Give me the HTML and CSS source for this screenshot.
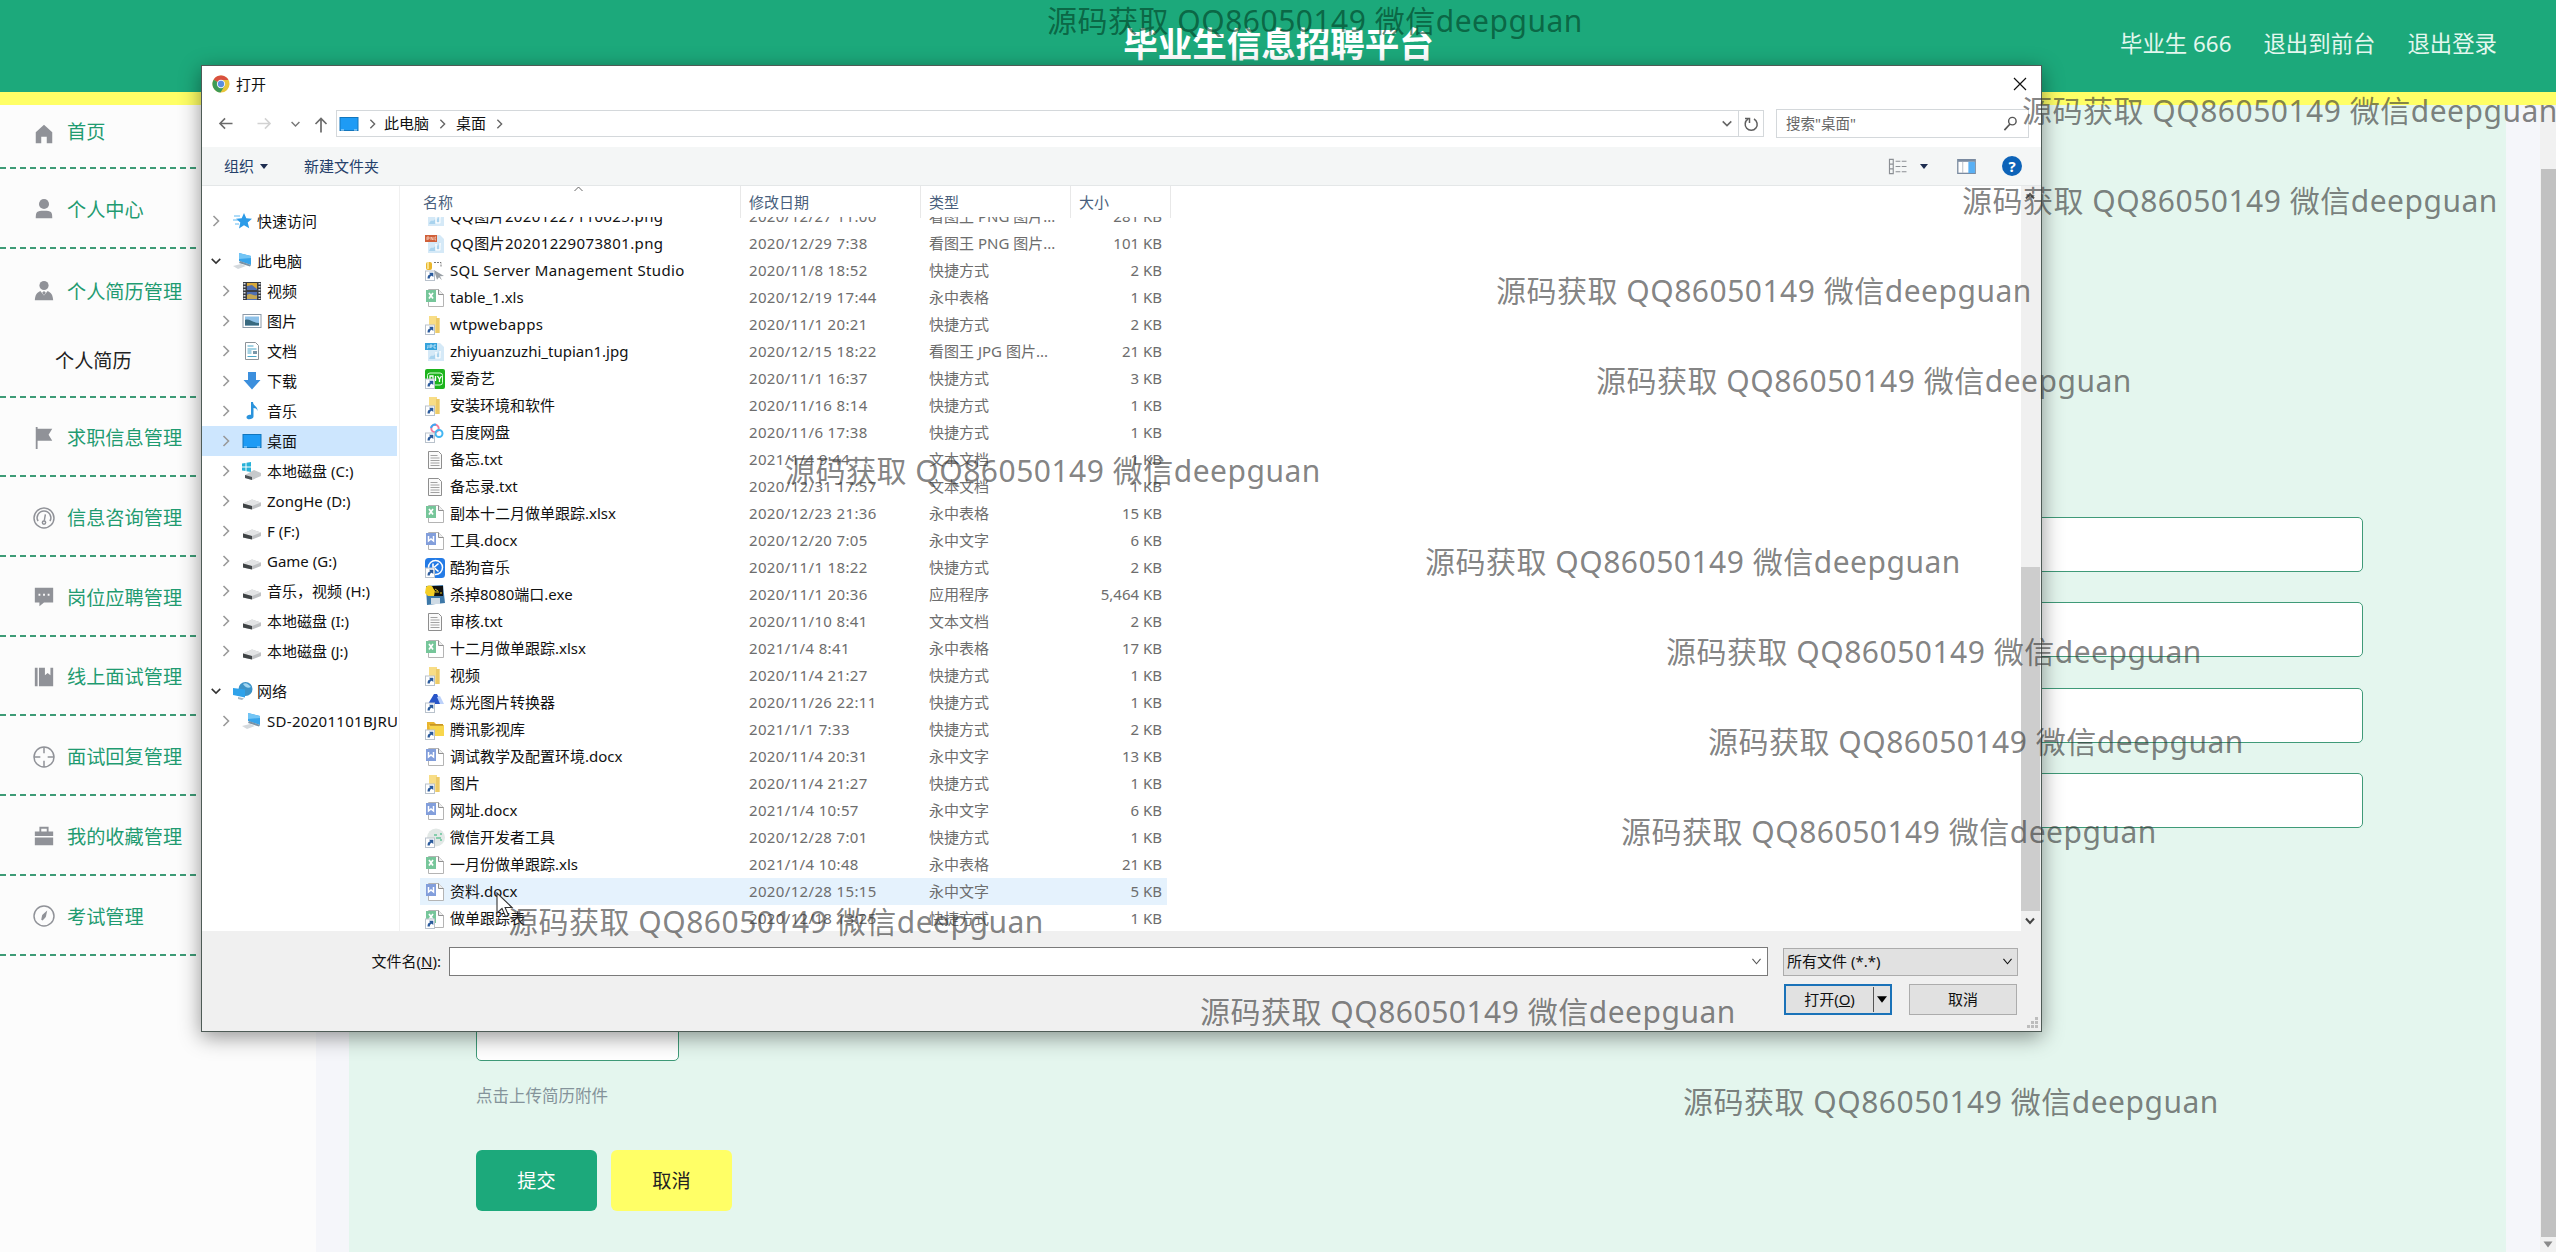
FILE: index.html
```html
<!DOCTYPE html>
<html lang="zh-CN">
<head>
<meta charset="utf-8">
<title>毕业生信息招聘平台</title>
<link rel="stylesheet" href="styles.css">
</head>
<body>
<svg class="sprite" aria-hidden="true">
  <defs>
    <symbol id="shortcut" viewBox="0 0 20 20"><rect x=".5" y="10" width="9" height="9.500" fill="#fff" stroke="#b9c2cc"/><path d="M2.500 17.500c0-3 1-4 2.800-4.300L4 11.800h4.300v4.300L6.800 14.700c-1.300.3-2 1.300-2 2.800z" fill="#2a5a9c"/></symbol>
    <symbol id="page" viewBox="0 0 20 20"><path d="M3.500 1.500h10l5 5v12h-15z" fill="#fff" stroke="#b4b4b4"/><path d="M13.500 1.500v5h5" fill="#eee" stroke="#8f8f8f"/></symbol>
    <symbol id="png" viewBox="0 0 20 20"><path d="M3 1h12l4 4v14H3z" fill="#d5e9f7"/><path d="M4 17c2-6 4-1 6-5s3 4 4-4l2 4v5z" fill="#a9d3ee"/><path d="M11 10v6h4V9" fill="none" stroke="#fff" stroke-width="1.500"/><rect y="1" width="12" height="7" fill="#d0603a"/><path d="M2 3v3M2 3h2v2H2M6 6V3l2 3V3M11 3h-1v3h1" stroke="#f8d8c8" fill="none" stroke-width=".8"/></symbol>
    <symbol id="jpg" viewBox="0 0 20 20"><path d="M3 1h12l4 4v14H3z" fill="#d5e9f7"/><path d="M4 17c2-6 4-1 6-5s3 4 4-4l2 4v5z" fill="#a9d3ee"/><path d="M11 10v6h4V9" fill="none" stroke="#fff" stroke-width="1.500"/><rect y="1" width="12" height="7" fill="#35a3dc"/><path d="M3 3v3H2M5 6V3h2v2H5M11 3H9v3h2" stroke="#d8f0ff" fill="none" stroke-width=".8"/></symbol>
    <symbol id="sql" viewBox="0 0 20 20"><rect x="1" y="1" width="6" height="8" rx="2" fill="#e9b62c"/><rect x="2" y="1" width="2" height="7" fill="#f8e08a"/><path d="M9 1.500h7v5" fill="none" stroke="#777" stroke-dasharray="2 1"/><path d="M9 9l10 6-4 .3 2 4-3-3-2 2.500z" fill="#9aa0a6"/><use href="#shortcut"/></symbol>
    <symbol id="xls" viewBox="0 0 20 20"><use href="#page"/><rect x="1" y="2" width="10" height="12" fill="#76c69a"/><path d="M4 5l4 5.500M8 5l-4 5.500" stroke="#fff" stroke-width="1.700"/></symbol>
    <symbol id="doc" viewBox="0 0 20 20"><use href="#page"/><rect x="1" y="2" width="10" height="12" fill="#829edb"/><path d="M3.500 5v5l2.500-2 2.500 2V5" stroke="#fff" stroke-width="1.500" fill="none"/></symbol>
    <symbol id="xlslink" viewBox="0 0 20 20"><use href="#xls"/><use href="#shortcut"/></symbol>
    <symbol id="folder" viewBox="0 0 20 20"><path d="M4 1h8v2h2.500v15H4z" fill="#f8dd86"/><path d="M11 3h3.500v15H11z" fill="#ecca68"/><use href="#shortcut"/></symbol>
    <symbol id="qiyi" viewBox="0 0 20 20"><rect width="20" height="20" rx="2" fill="#1db41d"/><rect x="2.500" y="4" width="15" height="12" rx="2.500" fill="none" stroke="#d9ffd9"/><path d="M5 7h3v4H5zM10.500 7v5M12.500 7l2 3 2-3M14.500 10v3" stroke="#fff" fill="none" stroke-width="1.300"/><use href="#shortcut"/></symbol>
    <symbol id="baidu" viewBox="0 0 20 20"><circle cx="10" cy="5.500" r="3.700" fill="none" stroke="#f17a9c" stroke-width="2"/><path d="M6 5a4 4 0 0 1 5-3.300" fill="none" stroke="#3aa8f5" stroke-width="2"/><circle cx="14" cy="10.500" r="3.500" fill="none" stroke="#44b6f2" stroke-width="2"/><use href="#shortcut"/></symbol>
    <symbol id="txt" viewBox="0 0 20 20"><path d="M3.500 1.500h10l3 3v14h-13z" fill="#fafafa" stroke="#8e8e8e"/><path d="M5.500 5.500h7M5.500 8h9M5.500 10.500h9M5.500 13h9M5.500 15.500h9" stroke="#a2a2a2"/></symbol>
    <symbol id="kugou" viewBox="0 0 20 20"><rect width="20" height="20" rx="3.500" fill="#247be6"/><circle cx="10.500" cy="9.500" r="7" fill="none" stroke="#fff" stroke-width="1.500"/><path d="M8 5.500v8M13.500 5.500l-4.500 4 4.500 4" fill="none" stroke="#fff" stroke-width="1.600"/><use href="#shortcut"/></symbol>
    <symbol id="exe" viewBox="0 0 20 20"><path d="M1 1l17-1 2 18-18 2z" fill="#3d78a8"/><path d="M6 1h12v10H7z" fill="#111"/><path d="M1 2c3-3 7-1 7 1l2 3-1 5H3L0 8z" fill="#f4ce26"/><path d="M10 4l3 2M10 7h4M15 8h2" stroke="#e8c820"/><path d="M6 13h9v6H6z" fill="#cfdbe5"/></symbol>
    <symbol id="photo" viewBox="0 0 20 20"><path d="M9 1h3l5 10H3z" fill="#2855c8"/><path d="M12 4l3-1 4 8h-4z" fill="#bcd1fa"/><use href="#shortcut"/></symbol>
    <symbol id="tencent" viewBox="0 0 20 20"><path d="M2 2h7l2 2h7v12H2z" fill="#e9b52f"/><path d="M4 5h15v11H6z" fill="#f8d64c"/><path d="M5 5h13" stroke="#a8741a"/><use href="#shortcut"/></symbol>
    <symbol id="wechat" viewBox="0 0 20 20"><circle cx="11" cy="9.500" r="9" fill="#e2e8e6"/><path d="M9 7h3M15 6h2M11 10h5M15 12h2" stroke="#68c39a" stroke-width="1.300"/><use href="#shortcut"/></symbol>

    <symbol id="star" viewBox="0 0 20 20"><path d="M11 2l2.300 5.200 5.700.5-4.300 3.800 1.500 5.800L11 14.200l-5 3.300 1.300-6L3 7.700l5.700-.5z" fill="#2c9be8"/><path d="M1 5h6M0 9h5M2 13h4" stroke="#5fb9f2"/></symbol>
    <symbol id="pc" viewBox="0 0 20 20"><path d="M6 2l12 3v9L6 10z" fill="#38a4ea"/><path d="M6 2l12 3v2L6 8z" fill="#73c5f5"/><path d="M7 10l11 4-1 1.500L6 12z" fill="#7b92a4"/><path d="M0 15l8-2 5 2-8 3z" fill="#d4d9dd"/></symbol>
    <symbol id="video" viewBox="0 0 20 20"><rect x="1" y="1" width="18" height="18" fill="#3a3d42"/><path d="M2.500 2v16M17.500 2v16" stroke="#d8dde4" stroke-width="2" stroke-dasharray="1.500 1.500"/><path d="M5 2h10v7H5z" fill="#d8a93a"/><path d="M5 5l5-1 5 4v1H5zM5 11h10v8H5z" fill="#506fb0"/><path d="M5 14c4-3 7 2 10 0v4H5z" fill="#c7a750"/></symbol>
    <symbol id="picture" viewBox="0 0 20 20"><rect x="1" y="3.500" width="18" height="13" fill="#fff" stroke="#8c9aa8"/><path d="M3 5.500h14v9H3z" fill="#8ec1e8"/><path d="M3 9c4-2 8 3 14 3v2.500H3z" fill="#38697f"/></symbol>
    <symbol id="document" viewBox="0 0 20 20"><path d="M3.500 1.500h10l3 3v14h-13z" fill="#fff" stroke="#8c9399"/><path d="M5.500 5h6M5.500 8h9M5.500 10h4M5.500 12h4M5.500 15.500h9" stroke="#4ba6c8"/><rect x="11" y="10" width="4" height="3" fill="#7a97a8"/></symbol>
    <symbol id="download" viewBox="0 0 20 20"><path d="M6 1h8v8h4.500L10 18.500 1.500 9H6z" fill="#3c8fdd"/></symbol>
    <symbol id="music" viewBox="0 0 20 20"><path d="M9 1h2c0 4 5 4 4.500 9-.5-2-2-3-4-3v8.500c0 3-7 4-7 .7 0-2 2.500-3 4.500-2.400z" fill="#2a93dc"/></symbol>
    <symbol id="desktop" viewBox="0 0 20 20"><rect x="1" y="3.500" width="18" height="13" fill="#1e9bf5" stroke="#1276bd"/><path d="M2 16h3M15 16h3" stroke="#bfe3ff"/></symbol>
    <symbol id="osdrive" viewBox="0 0 20 20"><path d="M0 2.500l3.500-.5v3.500H0zM4.500 1.800L9 1v4.500H4.500zM0 6.500h3.500V10L0 9.500zM4.500 6.500H9V11l-4.500-.7z" fill="#28b2d8"/><path d="M3 14l9-5 7 3v3l-9 4-7-2z" fill="#c6c9cb"/><path d="M3 14l7 2v3l-7-2z" fill="#4b5154"/></symbol>
    <symbol id="drive" viewBox="0 0 20 20"><path d="M1 12.500L10 8.500l9 3v3.500l-9 3.500-9-2z" fill="#bfc1c3"/><path d="M1 12.500l9 2.500 9-3.500-9-3z" fill="#e3e4e5"/><path d="M1 12.500l9 2.500v3.500l-9-2z" fill="#404446"/></symbol>
    <symbol id="network" viewBox="0 0 20 20"><circle cx="12.500" cy="8" r="7" fill="#3c93c8"/><path d="M10 3c3-2 6 1 8 3-3 2-6 0-8-3z" fill="#a4d6f0"/><path d="M0 7l12 1.500v8L0 14z" fill="#2fa2ea"/><path d="M5 16l6 1.500-2 1.500-4-1z" fill="#a9b7c2"/></symbol>

    <symbol id="house" viewBox="0 0 24 24"><path d="M12 2l9 8v12h-6v-7H9v7H3V10z"/></symbol>
    <symbol id="user" viewBox="0 0 24 24"><circle cx="12" cy="6.500" r="5.500"/><path d="M3 22c0-7 1-8 9-8s9 1 9 8z"/></symbol>
    <symbol id="usertie" viewBox="0 0 24 24"><circle cx="12" cy="6" r="5"/><path d="M2 22c.5-6 2-8 6-10l4 5 4-5c4 2 5.500 4 6 10z"/><path d="M12 12l2 2-2 2.500-2-2.500z"/></symbol>
    <symbol id="flag" viewBox="0 0 24 24"><path d="M3 0h2v2h16l-4 6.500 4 6.500H5v9H3z"/></symbol>
    <symbol id="gauge" viewBox="0 0 24 24"><g fill="none" stroke="currentColor" stroke-width="1.600"><circle cx="12" cy="12" r="10.900"/><path d="M5.500 15.500a7.500 7.500 0 1 1 13 0M12.300 15l1.200-7"/><circle cx="12" cy="17" r="1.800"/></g></symbol>
    <symbol id="chat" viewBox="0 0 24 24"><path d="M2 2h20v16H12l-5 4v-4H2z"/><path d="M6 9.500h2M11 9.500h2M16 9.500h2" stroke="#fcfcfc" stroke-width="2"/></symbol>
    <symbol id="book" viewBox="0 0 24 24"><path d="M2 2h3v20H2zM6.500 2H13v8l3-2.500 3 2.500V2h3v20H6.500z"/></symbol>
    <symbol id="aim" viewBox="0 0 24 24"><g fill="none" stroke="currentColor" stroke-width="1.600"><circle cx="12" cy="12" r="10.900"/><path d="M12 1v7M12 16v7M1 12h7M16 12h7"/></g></symbol>
    <symbol id="case" viewBox="0 0 24 24"><path d="M7 2h10v5h5v5H2V7h5zM9 4v3h6V4zM2 13.500h20V22H2z" fill-rule="evenodd"/></symbol>
    <symbol id="compass" viewBox="0 0 24 24"><circle cx="12" cy="12" r="10.900" fill="none" stroke="currentColor" stroke-width="1.600"/><path d="M15.500 6L14 13l-3.500 4-1.500-1 1-5z"/></symbol>
    <symbol id="right" viewBox="0 0 10 14"><path d="M2.500 2l5 5-5 5" fill="none" stroke="currentColor" stroke-width="1.600"/></symbol>
    <symbol id="down" viewBox="0 0 14 10"><path d="M2 2.500l5 5 5-5" fill="none" stroke="currentColor" stroke-width="1.800"/></symbol>
    <symbol id="thin" viewBox="0 0 12 10"><path d="M1.500 2L6 7.500 10.500 2" fill="none" stroke="currentColor" stroke-width="1.200"/></symbol>
  </defs>
</svg>

<div class="app">
  <header class="topbar">
    <h1>毕业生信息招聘平台</h1>
    <nav class="account"><a>毕业生 666</a><a>退出到前台</a><a>退出登录</a></nav>
  </header>
  <div class="stripe"></div>
  <div class="body">
    <aside class="sidebar">
      <ul class="menu">
        <li class="first"><svg><use href="#house"/></svg>首页</li>
        <li><svg><use href="#user"/></svg>个人中心</li>
        <li class="open"><svg><use href="#usertie"/></svg>个人简历管理</li>
        <li class="sub">个人简历</li>
        <li><svg><use href="#flag"/></svg>求职信息管理</li>
        <li><svg><use href="#gauge"/></svg>信息咨询管理</li>
        <li><svg><use href="#chat"/></svg>岗位应聘管理</li>
        <li><svg><use href="#book"/></svg>线上面试管理</li>
        <li><svg><use href="#aim"/></svg>面试回复管理</li>
        <li><svg><use href="#case"/></svg>我的收藏管理</li>
        <li><svg><use href="#compass"/></svg>考试管理</li>
      </ul>
    </aside>
    <main class="content">
      <form class="resume">
        <div class="field"></div><div class="field"></div><div class="field"></div><div class="field"></div>
        <div class="upload"></div>
        <p class="hint">点击上传简历附件</p>
        <div class="actions"><button type="button" class="submit">提交</button><button type="button" class="cancel">取消</button></div>
      </form>
    </main>
    <div class="pagebar"><div class="pagethumb"></div><svg viewBox="0 0 16 14"><path d="M3.500 4h9L8 10z" fill="#8a8a8a"/></svg></div>
  </div>
</div>

<section class="dialog">
  <div class="titlebar">
    <svg class="chrome" viewBox="0 0 20 20"><circle cx="10" cy="10" r="9.500" fill="#e8c53a"/><path d="M10 10L1.800 5.200A9.500 9.500 0 0 1 18.300 5.500H10z" fill="#d9503f"/><path d="M10 10L1.800 5.200A9.500 9.500 0 0 0 9.500 19.500L14 12z" fill="#3d9a55"/><circle cx="10" cy="10" r="4.600" fill="#eef3fa"/><circle cx="10" cy="10" r="3.500" fill="#5a8ee0"/></svg>
    <span>打开</span>
    <svg class="close" viewBox="0 0 14 14"><path d="M1 1l12 12M13 1L1 13" stroke="#111" stroke-width="1.200"/></svg>
  </div>
  <div class="navbar">
    <svg class="arrow back" viewBox="0 0 16 14"><path d="M15 7H2M7 1.500L1.500 7 7 12.500" fill="none" stroke="#6b6b6b" stroke-width="1.700"/></svg>
    <svg class="arrow forward" viewBox="0 0 16 14"><path d="M1 7h13M9 1.500L14.500 7 9 12.500" fill="none" stroke="#d2d2d2" stroke-width="1.700"/></svg>
    <svg class="recent"><use href="#down"/></svg>
    <svg class="up" viewBox="0 0 14 16"><path d="M7 15.500V2M1.500 7L7 1.500 12.500 7" fill="none" stroke="#6b6b6b" stroke-width="1.700"/></svg>
    <div class="address">
      <svg class="place"><use href="#desktop"/></svg>
      <svg class="sep"><use href="#right"/></svg><span>此电脑</span>
      <svg class="sep"><use href="#right"/></svg><span>桌面</span>
      <svg class="sep"><use href="#right"/></svg>
      <svg class="drop"><use href="#down"/></svg>
      <div class="refresh"><svg viewBox="0 0 16 16"><path d="M5 3.200A6 6 0 1 0 11 3M2 2.500h4.500V7" fill="none" stroke="#5f5f5f" stroke-width="1.500"/></svg></div>
    </div>
    <div class="search"><span>搜索"桌面"</span><svg viewBox="0 0 16 16"><circle cx="10" cy="5.500" r="4" fill="none" stroke="#555" stroke-width="1.500"/><path d="M7.500 8.500l-6 6.500" stroke="#555" stroke-width="1.800"/></svg></div>
  </div>
  <div class="toolbar">
    <span class="organize">组织<i class="tri"></i></span><span>新建文件夹</span>
    <svg class="view" viewBox="0 0 20 18"><path d="M1.500 1.500h4v15h-4zM1.500 6.500h4M1.500 11.500h4M8 3.500h5M14.500 3.500h5M8 9h5M14.500 9h5M8 14.500h5M14.500 14.500h5" fill="none" stroke="#8b8f94" stroke-width="1.200"/></svg>
    <i class="tri"></i>
    <svg class="pane" viewBox="0 0 20 16"><rect x=".7" y=".7" width="18.600" height="14.600" fill="#fff" stroke="#7b8ba0" stroke-width="1.400"/><path d="M1 2h18" stroke="#7b8ba0" stroke-width="2"/><rect x="12" y="3" width="7" height="12" fill="#59b0f4"/><path d="M6 3v12" stroke="#b5bcc4"/></svg>
    <b class="help">?</b>
  </div>
  <div class="panes">
    <ul class="tree">
      <li class="root"><svg class="tw"><use href="#right"/></svg><svg class="ic"><use href="#star"/></svg>快速访问</li>
      <li class="root expanded gap10"><svg class="tw"><use href="#down"/></svg><svg class="ic"><use href="#pc"/></svg>此电脑</li>
      <li><svg class="tw"><use href="#right"/></svg><svg class="ic"><use href="#video"/></svg>视频</li>
      <li><svg class="tw"><use href="#right"/></svg><svg class="ic"><use href="#picture"/></svg>图片</li>
      <li><svg class="tw"><use href="#right"/></svg><svg class="ic"><use href="#document"/></svg>文档</li>
      <li><svg class="tw"><use href="#right"/></svg><svg class="ic"><use href="#download"/></svg>下载</li>
      <li><svg class="tw"><use href="#right"/></svg><svg class="ic"><use href="#music"/></svg>音乐</li>
      <li class="selected"><svg class="tw"><use href="#right"/></svg><svg class="ic"><use href="#desktop"/></svg>桌面</li>
      <li><svg class="tw"><use href="#right"/></svg><svg class="ic"><use href="#osdrive"/></svg>本地磁盘 (C:)</li>
      <li><svg class="tw"><use href="#right"/></svg><svg class="ic"><use href="#drive"/></svg>ZongHe (D:)</li>
      <li><svg class="tw"><use href="#right"/></svg><svg class="ic"><use href="#drive"/></svg>F (F:)</li>
      <li><svg class="tw"><use href="#right"/></svg><svg class="ic"><use href="#drive"/></svg>Game (G:)</li>
      <li><svg class="tw"><use href="#right"/></svg><svg class="ic"><use href="#drive"/></svg>音乐，视频 (H:)</li>
      <li><svg class="tw"><use href="#right"/></svg><svg class="ic"><use href="#drive"/></svg>本地磁盘 (I:)</li>
      <li><svg class="tw"><use href="#right"/></svg><svg class="ic"><use href="#drive"/></svg>本地磁盘 (J:)</li>
      <li class="root expanded gap10"><svg class="tw"><use href="#down"/></svg><svg class="ic"><use href="#network"/></svg>网络</li>
      <li class="host"><svg class="tw"><use href="#right"/></svg><svg class="ic"><use href="#pc"/></svg>SD-20201101BJRU</li>
    </ul>
    <div class="listing">
      <div class="columns">
        <span class="c-name">名称<svg viewBox="0 0 10 6"><path d="M1 5l4-4 4 4" fill="none" stroke="#666"/></svg></span><span class="c-date">修改日期</span><span class="c-type">类型</span><span class="c-size">大小</span>
      </div>
      <ul class="files">
        <li><svg><use href="#png"/></svg><span class="wide">QQ图片20201227110625.png</span><time>2020/12/27 11:06</time><em>看图王 PNG 图片...</em><b>281 KB</b></li>
        <li><svg><use href="#png"/></svg><span class="wide">QQ图片20201229073801.png</span><time>2020/12/29 7:38</time><em>看图王 PNG 图片...</em><b>101 KB</b></li>
        <li><svg><use href="#sql"/></svg><span class="wide">SQL Server Management Studio</span><time>2020/11/8 18:52</time><em>快捷方式</em><b>2 KB</b></li>
        <li><svg><use href="#xls"/></svg><span>table_1.xls</span><time>2020/12/19 17:44</time><em>永中表格</em><b>1 KB</b></li>
        <li><svg><use href="#folder"/></svg><span class="wide">wtpwebapps</span><time>2020/11/1 20:21</time><em>快捷方式</em><b>2 KB</b></li>
        <li><svg><use href="#jpg"/></svg><span>zhiyuanzuzhi_tupian1.jpg</span><time>2020/12/15 18:22</time><em>看图王 JPG 图片...</em><b>21 KB</b></li>
        <li><svg><use href="#qiyi"/></svg><span>爱奇艺</span><time>2020/11/1 16:37</time><em>快捷方式</em><b>3 KB</b></li>
        <li><svg><use href="#folder"/></svg><span>安装环境和软件</span><time>2020/11/16 8:14</time><em>快捷方式</em><b>1 KB</b></li>
        <li><svg><use href="#baidu"/></svg><span>百度网盘</span><time>2020/11/6 17:38</time><em>快捷方式</em><b>1 KB</b></li>
        <li><svg><use href="#txt"/></svg><span>备忘.txt</span><time>2021/1/4 9:44</time><em>文本文档</em><b>1 KB</b></li>
        <li><svg><use href="#txt"/></svg><span>备忘录.txt</span><time>2020/12/31 17:57</time><em>文本文档</em><b>1 KB</b></li>
        <li><svg><use href="#xls"/></svg><span>副本十二月做单跟踪.xlsx</span><time>2020/12/23 21:36</time><em>永中表格</em><b>15 KB</b></li>
        <li><svg><use href="#doc"/></svg><span>工具.docx</span><time>2020/12/20 7:05</time><em>永中文字</em><b>6 KB</b></li>
        <li><svg><use href="#kugou"/></svg><span>酷狗音乐</span><time>2020/11/1 18:22</time><em>快捷方式</em><b>2 KB</b></li>
        <li><svg><use href="#exe"/></svg><span>杀掉8080端口.exe</span><time>2020/11/1 20:36</time><em>应用程序</em><b>5,464 KB</b></li>
        <li><svg><use href="#txt"/></svg><span>审核.txt</span><time>2020/11/10 8:41</time><em>文本文档</em><b>2 KB</b></li>
        <li><svg><use href="#xls"/></svg><span>十二月做单跟踪.xlsx</span><time>2021/1/4 8:41</time><em>永中表格</em><b>17 KB</b></li>
        <li><svg><use href="#folder"/></svg><span>视频</span><time>2020/11/4 21:27</time><em>快捷方式</em><b>1 KB</b></li>
        <li><svg><use href="#photo"/></svg><span>烁光图片转换器</span><time>2020/11/26 22:11</time><em>快捷方式</em><b>1 KB</b></li>
        <li><svg><use href="#tencent"/></svg><span>腾讯影视库</span><time>2021/1/1 7:33</time><em>快捷方式</em><b>2 KB</b></li>
        <li><svg><use href="#doc"/></svg><span>调试教学及配置环境.docx</span><time>2020/11/4 20:31</time><em>永中文字</em><b>13 KB</b></li>
        <li><svg><use href="#folder"/></svg><span>图片</span><time>2020/11/4 21:27</time><em>快捷方式</em><b>1 KB</b></li>
        <li><svg><use href="#doc"/></svg><span>网址.docx</span><time>2021/1/4 10:57</time><em>永中文字</em><b>6 KB</b></li>
        <li><svg><use href="#wechat"/></svg><span>微信开发者工具</span><time>2020/12/28 7:01</time><em>快捷方式</em><b>1 KB</b></li>
        <li><svg><use href="#xls"/></svg><span>一月份做单跟踪.xls</span><time>2021/1/4 10:48</time><em>永中表格</em><b>21 KB</b></li>
        <li class="hover"><svg><use href="#doc"/></svg><span>资料.docx</span><time>2020/12/28 15:15</time><em>永中文字</em><b>5 KB</b></li>
        <li><svg><use href="#xlslink"/></svg><span>做单跟踪表</span><time>2020/12/18 13:25</time><em>快捷方式</em><b>1 KB</b></li>
      </ul>
    </div>
    <div class="listbar"><svg viewBox="0 0 14 10"><path d="M3 7.500l4-4.500 4 4.500" fill="none" stroke="#555" stroke-width="2"/></svg><div class="listthumb"></div><svg viewBox="0 0 14 10"><path d="M3 2.500L7 7l4-4.500" fill="none" stroke="#444" stroke-width="2"/></svg></div>
  </div>
  <div class="footer">
    <div class="line">
      <label>文件名(<u>N</u>):</label>
      <div class="filename"><svg><use href="#thin"/></svg></div>
      <div class="filter">所有文件 (*.*)<svg><use href="#thin"/></svg></div>
    </div>
    <div class="line buttons">
      <div class="ok"><span>打开(<u>O</u>)</span><i><svg viewBox="0 0 12 10"><path d="M0 1h12L6 9z"/></svg></i></div>
      <div class="no">取消</div>
    </div>
    <svg class="grip" viewBox="0 0 12 12"><path d="M8 0h3v3H8zM4 4h3v3H4zM8 4h3v3H8zM0 8h3v3H0zM4 8h3v3H4zM8 8h3v3H8z" fill="#bdbdbd"/></svg>
  </div>
</section>

<svg class="pointer" viewBox="0 0 18 26"><path d="M1 1v20l5-4.500 3.500 8 3-1.300-3.400-7.700H16z" fill="#fff" stroke="#333" stroke-width="1.100"/></svg>

<div class="watermarks">
  <p>源码获取 QQ86050149 微信deepguan</p><p>源码获取 QQ86050149 微信deepguan</p><p>源码获取 QQ86050149 微信deepguan</p><p>源码获取 QQ86050149 微信deepguan</p><p>源码获取 QQ86050149 微信deepguan</p><p>源码获取 QQ86050149 微信deepguan</p><p>源码获取 QQ86050149 微信deepguan</p><p>源码获取 QQ86050149 微信deepguan</p><p>源码获取 QQ86050149 微信deepguan</p><p>源码获取 QQ86050149 微信deepguan</p><p>源码获取 QQ86050149 微信deepguan</p><p>源码获取 QQ86050149 微信deepguan</p><p>源码获取 QQ86050149 微信deepguan</p>
</div>
</body>
</html>
```
FILE: styles.css
```css
* { box-sizing: border-box; margin: 0; padding: 0; }
html, body { height: 100%; overflow: hidden; }
body { position: relative; font: 15px/1 "Noto Sans", "Noto Sans CJK SC", sans-serif; color: #111; background: #f5f6fa; white-space: nowrap; }
ul { list-style: none; }
em, i { font-style: normal; }
svg { display: block; flex: none; }
.sprite { position: absolute; width: 0; height: 0; }

/* page behind the dialog */
.app { display: flex; flex-direction: column; height: 1252px; }
.topbar { display: grid; grid-template-columns: 1fr auto 1fr; align-items: center; height: 92px; padding: 0 59px 3px 4px; background: #1ca97b; color: #fff; }
.topbar h1 { grid-column: 2; padding-left: 56px; font-size: 34.500px; font-weight: 700; }
.account { display: flex; justify-content: flex-end; gap: 32px; font-size: 22.400px; color: #e3f7ee; }
.stripe { height: 13px; background: #ffff66; }
.body { display: flex; flex: 1; min-height: 0; }
.sidebar { width: 316px; background: #fcfcfc; }
.menu { width: 198px; }
.menu li { display: flex; align-items: center; gap: 12px; height: 79.700px; padding: 1px 0 0 33px; font-size: 19.200px; color: #1f9b71; background: repeating-linear-gradient(90deg, #3d9b76 0 6px, transparent 6px 10px) 0 100% / 100% 2px no-repeat; }
.menu svg { width: 22px; height: 22px; color: #909298; fill: #909298; }
.menu .first { height: 64px; padding-bottom: 11px; }
.menu .first svg { position: relative; top: 2px; }
.menu .open { height: 82px; padding-top: 3px; background: none; }
.menu .sub { height: 67px; padding: 0 0 7px 55px; color: #222; }
.content { flex: 1; margin: 0 34px 0 33px; background: #e4f6ee; }
.resume { padding: 412px 143px 0 127px; }
.field { height: 55px; margin-bottom: 30.300px; border: 1px solid #3f9a78; border-radius: 5px; background: #fff; }
.upload { width: 203px; height: 203px; border: 1px solid #3f9a78; border-radius: 5px; background: #fff; }
.hint { margin-top: 27px; font-size: 16.500px; color: #84939a; }
.actions { display: flex; gap: 14px; margin-top: 45px; }
.actions button { width: 121px; height: 61px; border: 0; border-radius: 6px; font: 19.200px "Noto Sans", "Noto Sans CJK SC", sans-serif; }
.submit { background: #1ca97b; color: #fff; }
.cancel { background: #ffff66; color: #222; }
.pagebar { display: flex; flex-direction: column; justify-content: flex-end; align-items: center; width: 16px; background: #f1f1f1; }
.pagethumb { width: 15px; height: 1068px; margin-left: 1px; background: #c1c1c1; }
.pagebar svg { width: 16px; height: 15px; }

/* file dialog */
.dialog { position: absolute; left: 201px; top: 65px; display: flex; flex-direction: column; width: 1841px; height: 967px; border: 1px solid #4e5b56; background: #fff; box-shadow: 0 5px 20px rgba(0,0,0,.42); }
.titlebar { display: flex; align-items: center; height: 36px; padding: 0 14px 0 10px; gap: 6px; }
.chrome { width: 18px; height: 18px; }
.close { width: 14px; height: 14px; margin-left: auto; }
.navbar { display: flex; align-items: center; height: 45px; padding: 0 0 2px 16px; }
.arrow { width: 16px; height: 13px; }
.forward { margin-left: 22px; }
.recent { width: 11px; height: 8px; margin-left: 18px; color: #777; }
.up { width: 14px; height: 16px; margin: 2px 8px 0 13px; }
.address { display: flex; align-items: center; width: 1428px; height: 27px; border: 1px solid #d4d8db; padding-left: 2px; }
.place { width: 20px; height: 20px; }
.sep { width: 9px; height: 12px; margin: 0 9px; color: #666; }
.place + .sep { margin-right: 7px; }
.drop { width: 12px; height: 9px; margin-left: auto; margin-right: 5px; color: #666; }
.refresh { display: flex; align-items: center; justify-content: center; width: 25px; height: 25px; border-left: 1px solid #d4d8db; }
.refresh svg { width: 16px; height: 16px; }
.search { display: flex; align-items: center; justify-content: space-between; width: 253px; height: 29px; margin-left: 12px; padding: 0 10px 0 9px; border: 1px solid #d4d8db; color: #666; font-size: 14.500px; }
.search svg { width: 15px; height: 15px; }
.toolbar { display: flex; align-items: center; height: 39px; padding: 0 19px 0 22px; background: #f4f6f6; border-bottom: 1px solid #e4e7e8; color: #25406a; }
.tri { display: inline-block; border: 4px solid transparent; border-top: 5px solid #1d2d50; border-bottom: 0; }
.organize { display: flex; align-items: center; gap: 6px; margin-right: 36px; }
.view { width: 19px; height: 17px; margin-left: auto; margin-right: 13px; }
.pane { width: 19px; height: 15px; margin: 0 26px 0 29px; }
.help { width: 20px; height: 20px; border-radius: 50%; background: #0d63b8; color: #fff; font-size: 15px; line-height: 20px; text-align: center; }
.panes { display: flex; height: 745px; }
.tree { width: 198px; padding-top: 20px; border-right: 1px solid #f0f0f0; overflow: hidden; }
.tree li { display: flex; align-items: center; width: 195px; height: 30px; padding-left: 18px; overflow: hidden; }
.tree .gap10 { margin-top: 10px; }
.tree .root { padding-left: 8px; }
.tree .tw { width: 12px; height: 14px; margin-right: 10px; color: #9a9a9a; }
.tree .root .tw { margin-right: 11px; }
.tree .expanded .tw { color: #333; }
.tree .ic { width: 20px; height: 20px; margin-right: 5px; }
.tree .root .ic { margin-right: 4px; }
.tree .selected { background: #cde6fe; }
.tree .host { letter-spacing: .3px; }
.listing { width: 1621px; overflow: hidden; }
.columns { display: flex; height: 31px; color: #4a5f7d; }
.columns span { position: relative; height: 32px; line-height: 32px; padding-left: 8px; border-right: 1px solid #e8e8e8; }
.columns .c-name { width: 341px; padding-left: 23px; }
.c-name svg { position: absolute; left: 173px; top: 0; width: 11px; height: 6px; }
.c-date { width: 180px; }
.c-type { width: 150px; }
.c-size { width: 100px; }
.files { height: 714px; overflow: hidden; }
.files li { display: grid; grid-template-columns: 25px 299px 180px 140px 93px; align-items: center; width: 747px; height: 27px; margin-left: 20px; padding-left: 5px; }
.files li:first-child { margin-top: -14px; }
.files svg { width: 20px; height: 20px; }
.files .wide { letter-spacing: .37px; }
.files time, .files em, .files b { font-weight: 400; color: #6d6d6d; }
.files time { letter-spacing: .35px; }
.files b { text-align: right; }
.files .hover { background: #e5f2fd; }
.listbar { display: flex; flex-direction: column; width: 20px; background: #f0f0f0; }
.listbar svg { width: 14px; height: 20px; margin-left: 2px; }
.listthumb { width: 19px; height: 344px; margin-top: auto; background: #cdcdcd; }
.footer { position: relative; flex: 1; padding-top: 16px; background: #f0f0f0; }
.line { display: flex; align-items: center; }
.line label { width: 239px; margin-right: 8px; text-align: right; }
.filename { display: flex; align-items: center; justify-content: flex-end; width: 1319px; height: 29px; padding-right: 5px; border: 1px solid #7a7a7a; background: #fff; color: #555; }
.filename svg, .filter svg { width: 11px; height: 9px; }
.filter { display: flex; align-items: center; justify-content: space-between; width: 235px; height: 28px; margin-left: 15px; padding: 0 4px 0 3px; border: 1px solid #acacac; background: #e1e1e1; }
.buttons { margin-top: 8px; padding-left: 1582px; gap: 17px; }
.ok { display: flex; width: 108px; height: 31px; border: 2px solid #1a72b8; background: #e1e1e1; }
.ok span { flex: 1; margin: 1px 0; line-height: 24px; text-align: center; border-right: 1px solid #555; }
.ok i { display: flex; align-items: center; justify-content: center; width: 16px; }
.ok svg { width: 10px; height: 9px; }
.no { width: 108px; height: 31px; border: 1px solid #acacac; background: #e1e1e1; line-height: 29px; text-align: center; }
.grip { position: absolute; right: 2px; bottom: 2px; width: 12px; height: 12px; }

/* overlays */
.pointer { position: absolute; left: 496px; top: 892px; width: 18px; height: 26px; }
.watermarks { position: absolute; inset: 0; overflow: hidden; font-size: 30px; letter-spacing: .5px; color: rgba(50,50,50,.62); pointer-events: none; }
.watermarks p { height: 90.100px; line-height: 42px; padding-left: var(--x); }
.watermarks p:nth-child(1) { --x: 1047px; color: rgba(0,60,35,.62); }
.watermarks p:nth-child(2) { --x: 2022px; }
.watermarks p:nth-child(3) { --x: 1962px; }
.watermarks p:nth-child(4) { --x: 1496px; }
.watermarks p:nth-child(5) { --x: 1596px; }
.watermarks p:nth-child(6) { --x: 785px; }
.watermarks p:nth-child(7) { --x: 1425px; }
.watermarks p:nth-child(8) { --x: 1666px; }
.watermarks p:nth-child(9) { --x: 1708px; }
.watermarks p:nth-child(10) { --x: 1621px; }
.watermarks p:nth-child(11) { --x: 508px; }
.watermarks p:nth-child(12) { --x: 1200px; }
.watermarks p:nth-child(13) { --x: 1683px; }
```
